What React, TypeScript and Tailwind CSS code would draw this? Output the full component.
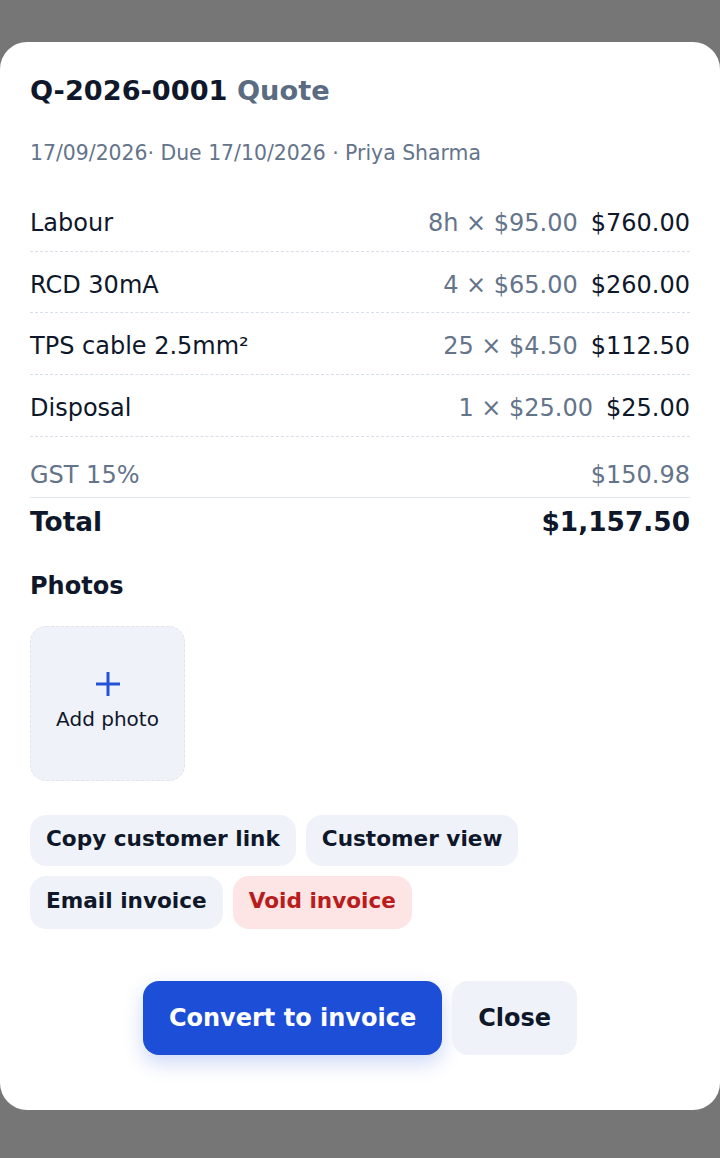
import React from "react";

const items = [
  { name: "Labour", qty: "8h × $95.00", total: "$760.00" },
  { name: "RCD 30mA", qty: "4 × $65.00", total: "$260.00" },
  { name: "TPS cable 2.5mm²", qty: "25 × $4.50", total: "$112.50" },
  { name: "Disposal", qty: "1 × $25.00", total: "$25.00" },
];

export default function App() {
  return (
    <div
      className="min-h-[1158px] bg-[#767676] pt-[42px]"
      style={{ fontFamily: "'DejaVu Sans', 'Liberation Sans', sans-serif" }}
    >
      <div className="h-[1068px] rounded-[27px] bg-white px-[30px] pt-[31px] text-[#0f172a]">
        <h1 className="text-[27.2px] font-bold leading-[36px]">
          Q-2026-0001 <span className="text-[#5b6b82]">Quote</span>
        </h1>
        <div className="mt-[30px] text-[20.4px] leading-[28px] text-[#64748b]">
          17/09/2026· Due 17/10/2026 · Priya Sharma
        </div>

        <div className="mt-[23px]">
          {items.map((it) => (
            <div
              key={it.name}
              className="flex items-center justify-between border-b border-dashed border-[#d9dfe8] pt-[18px] pb-[11px] text-[24px] leading-[31.67px]"
            >
              <span>{it.name}</span>
              <span className="flex gap-[13px]">
                <span className="text-[#64748b]">{it.qty}</span>
                <span>{it.total}</span>
              </span>
            </div>
          ))}
        </div>

        <div className="flex justify-between border-b border-[#e2e8f0] pt-[22px] pb-[6px] text-[24px] leading-[32px] text-[#64748b]">
          <span>GST 15%</span>
          <span>$150.98</span>
        </div>
        <div className="flex justify-between pt-[8px] text-[26.4px] font-bold leading-[32px]">
          <span>Total</span>
          <span>$1,157.50</span>
        </div>

        <div className="mt-[32px] text-[24px] font-bold leading-[32px]">Photos</div>
        <div className="mt-[24px] flex h-[155px] w-[155px] flex-col items-center justify-center rounded-[16px] border-[1.5px] border-dashed border-[#dfe5ee] bg-[#eff3f9] pb-[4px]">
          <svg width="28" height="28" viewBox="0 0 28 28">
            <path d="M14 2v24M2 14h24" stroke="#2453d6" strokeWidth="3" fill="none" />
          </svg>
          <span className="mt-[8px] text-[20px] leading-[26px]">Add photo</span>
        </div>

        <div className="mt-[34px] flex flex-wrap gap-[10px] text-[21.6px] font-bold leading-[27px]">
          <button className="rounded-[16px] bg-[#eff3f9] px-[16px] pt-[10px] pb-[14px]">Copy customer link</button>
          <button className="rounded-[16px] bg-[#eff3f9] px-[16px] pt-[10px] pb-[14px]">Customer view</button>
          <button className="rounded-[16px] bg-[#eff3f9] px-[16px] pt-[11px] pb-[15px]">Email invoice</button>
          <button className="rounded-[16px] bg-[#fee5e5] px-[16px] pt-[11px] pb-[15px] text-[#b91c1c]">Void invoice</button>
        </div>

        <div className="mt-[52px] flex justify-center gap-[10px] text-[24px] font-bold leading-[30px]">
          <button className="rounded-[16px] bg-[#1d4ed8] px-[26px] py-[22px] text-white shadow-[0_8px_20px_rgba(29,78,216,0.22)]">
            Convert to invoice
          </button>
          <button className="rounded-[16px] bg-[#eff3f9] px-[26px] py-[22px]">Close</button>
        </div>
      </div>
    </div>
  );
}
